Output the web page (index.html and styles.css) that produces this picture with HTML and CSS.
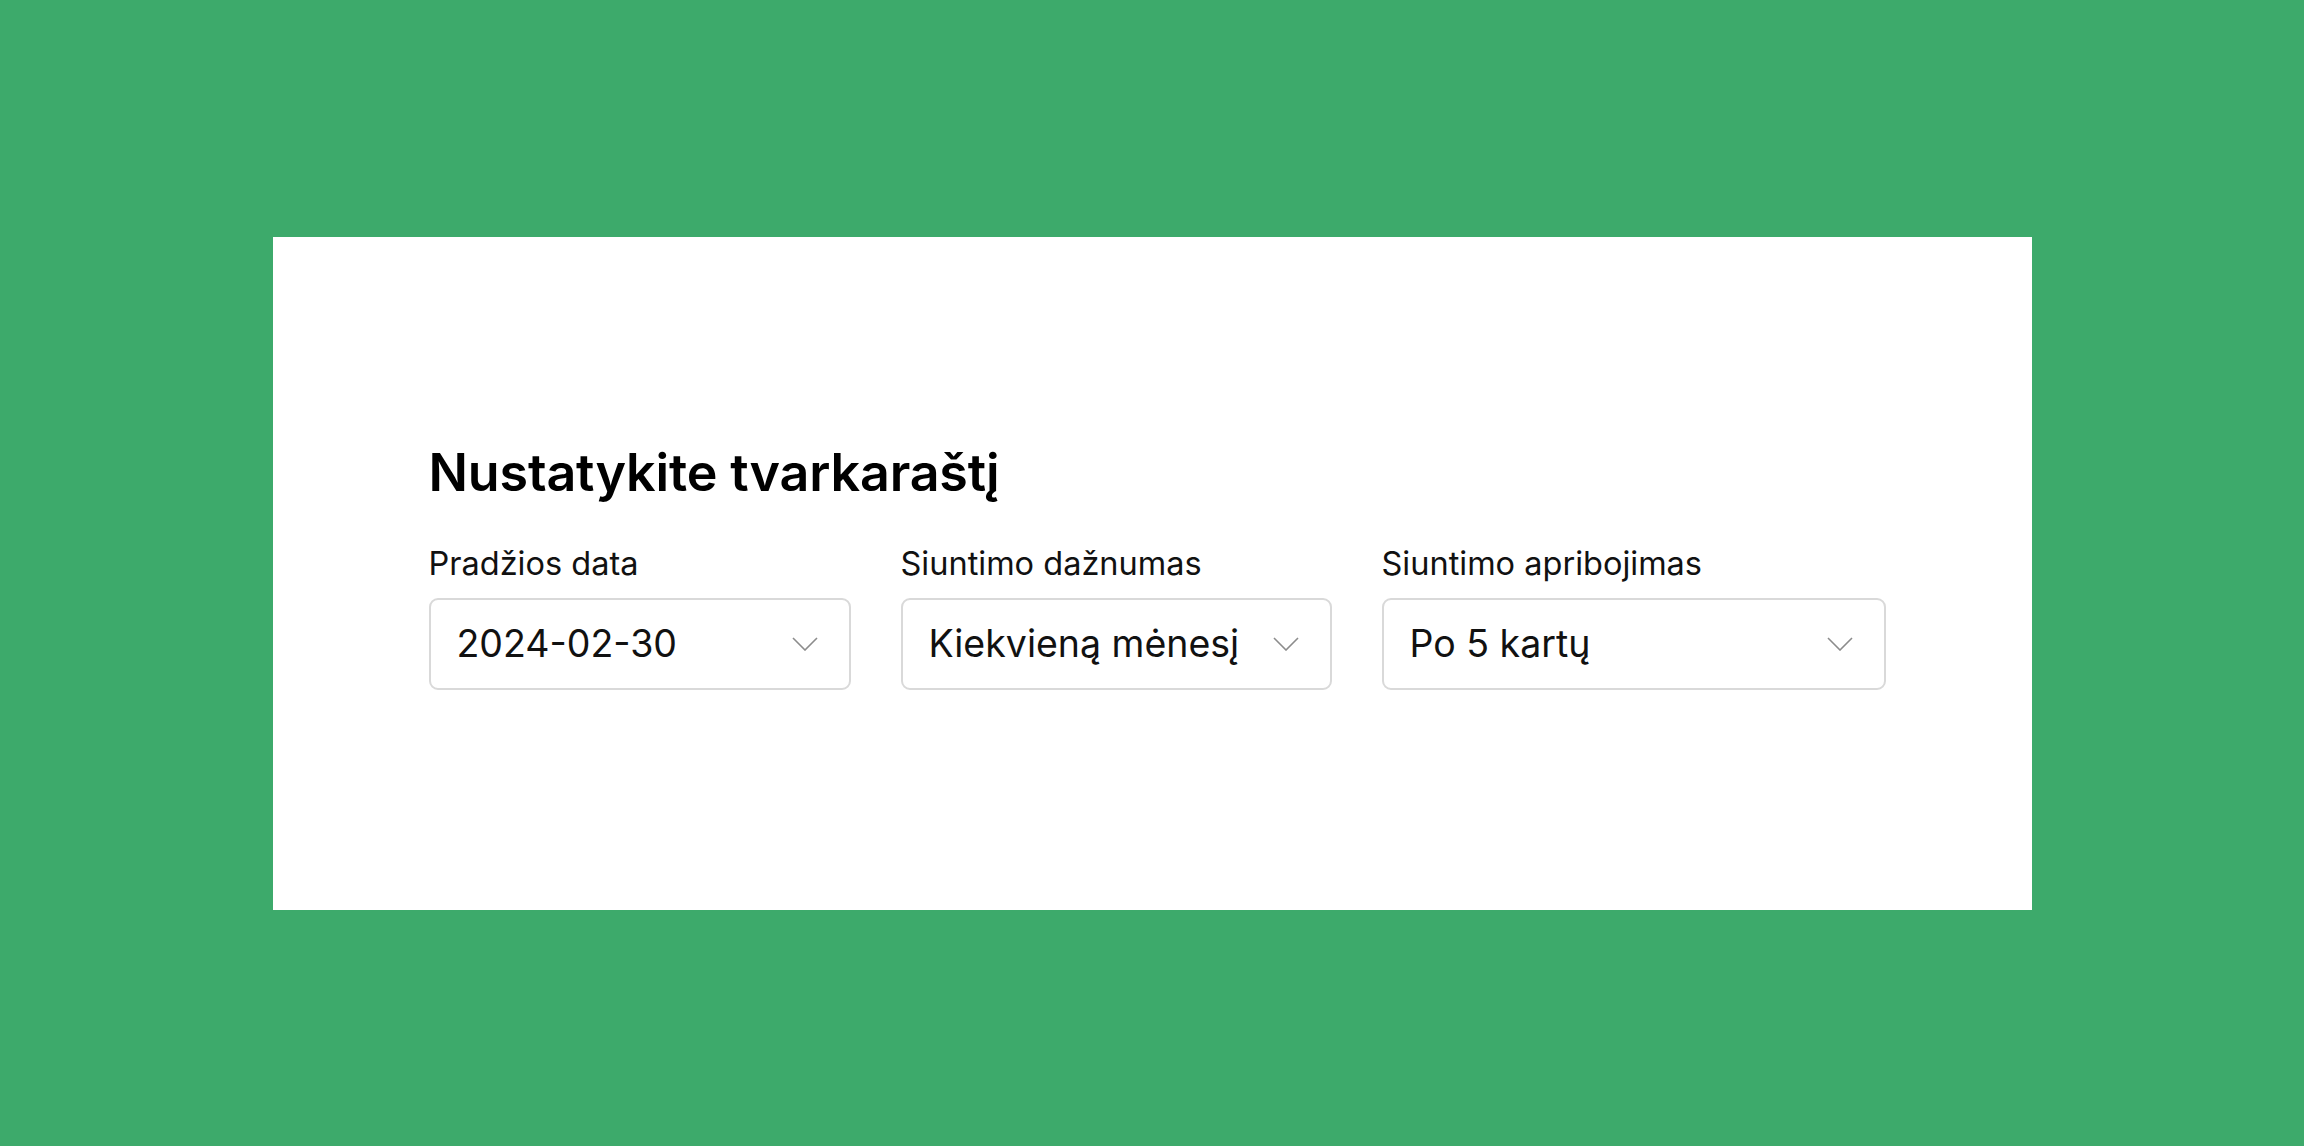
FILE: index.html
```html
<!DOCTYPE html>
<html lang="lt">

<head>
  <meta charset="UTF-8">
  <meta name="viewport" content="width=device-width, initial-scale=1.0">
  <title>Tvarkaraštis</title>
  <link rel="stylesheet" href="styles.css">
</head>

<body>
  <section class="schedule-card">
    <div class="schedule">
      <h1 class="schedule-title">Nustatykite tvarkaraštį</h1>
      <div class="schedule-fields">
        <div class="field field-date">
          <label class="field-label">Pradžios data</label>
          <div class="field-select">
            <span class="field-value">2024-02-30</span>
            <svg class="chevron" viewBox="0 0 26 14"><path d="M1 1 L13 13 L25 1" /></svg>
          </div>
        </div>
        <div class="field field-freq">
          <label class="field-label">Siuntimo dažnumas</label>
          <div class="field-select">
            <span class="field-value">Kiekvieną mėnesį</span>
            <svg class="chevron" viewBox="0 0 26 14"><path d="M1 1 L13 13 L25 1" /></svg>
          </div>
        </div>
        <div class="field field-limit">
          <label class="field-label">Siuntimo apribojimas</label>
          <div class="field-select">
            <span class="field-value">Po 5 kartų</span>
            <svg class="chevron" viewBox="0 0 26 14"><path d="M1 1 L13 13 L25 1" /></svg>
          </div>
        </div>
      </div>
    </div>
  </section>
</body>

</html>
```

FILE: styles.css
```css
html,
body {
  margin: 0;
  padding: 0;
}
body {
  width: 2304px;
  height: 1146px;
  background: #3daa6b;
  display: flex;
  align-items: center;
  justify-content: center;
  font-family: Inter, "Noto Sans", sans-serif;
}

.schedule-card {
  width: 1759px;
  height: 673px;
  background: #fff;
  box-sizing: border-box;
  padding: 205px 0 0 156px;
}

.schedule-title {
  margin: 0 0 40px;
  font-size: 52px;
  line-height: 1.2;
  font-weight: 600;
  color: #000;
  letter-spacing: -0.15px;
}

.schedule-fields {
  display: flex;
  gap: 50px;
}
.field {
  display: flex;
  flex-direction: column;
  gap: 15px;
}
.field-date {
  width: 422px;
}
.field-freq {
  width: 431px;
}
.field-limit {
  width: 504px;
}
.field-label {
  font-size: 32.5px;
  line-height: 1.2;
  color: #111;
}
.field-select {
  height: 92px;
  box-sizing: border-box;
  border: 2px solid #d9d9d9;
  border-radius: 9px;
  padding: 0 31px 0 26px;
  display: flex;
  align-items: center;
  justify-content: space-between;
}
.field-value {
  font-size: 37.5px;
  color: #111;
}
.chevron {
  width: 26px;
  height: 14px;
  fill: none;
  stroke: #8c8c8c;
  stroke-width: 1.6;
}
```
